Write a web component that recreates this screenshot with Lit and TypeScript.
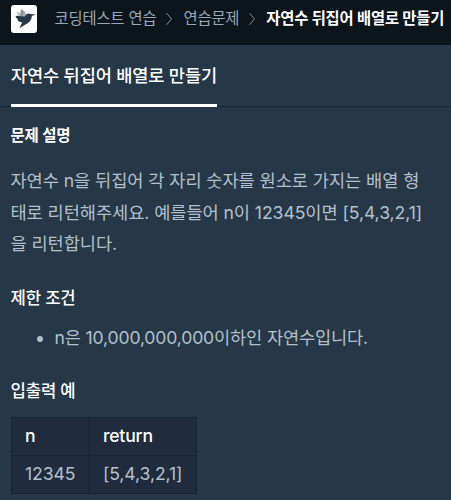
import { LitElement, html, css, svg } from "lit";
import { customElement } from "lit/decorators.js";

const chevron = html`<svg class="chevron" viewBox="0 0 8 14" aria-hidden="true">
  ${svg`<path d="M1.5 1.2 6.5 7 1.5 12.8" fill="none" stroke="currentColor" stroke-width="1" />`}
</svg>`;

@customElement("app-root")
export class AppRoot extends LitElement {
  static styles = css`
    :host {
      display: block;
      height: 500px;
      overflow: hidden;
      background: #263747;
      color: #b2c0cc;
      font-family: Inter, "Noto Sans CJK KR", sans-serif;
      font-size: 17.6px;
      line-height: 1.8;
      letter-spacing: -0.009em;
    }
    * { box-sizing: border-box; }
    .header {
      display: flex;
      align-items: center;
      height: 45px;
      padding: 0 0 8px 11px;
      background: #0c151c;
      color: #98a8b9;
      font-size: 15.35px;
      line-height: 24px;
      white-space: nowrap;
    }
    .logo { width: 26px; height: 28px; margin-right: 17.6px; flex: none; }
    .chevron { width: 8px; height: 14px; margin: 1px 10px 0 9px; flex: none; color: #78909c; }
    .current { color: #fff; font-weight: 700; }
    .tabs { display: flex; height: 62px; padding-left: 11px; border-bottom: 1px solid #172334; }
    .tab {
      height: 62px;
      padding-top: 15px;
      border-bottom: 3px solid #fff;
      color: #fff;
      font-weight: 500;
      white-space: nowrap;
    }
    .content { padding: 0 11px 0 10.5px; }
    h1, h2, p, ul { margin: 0; }
    h1, h2 { color: #fff; height: 24px; line-height: 24px; }
    h1 { margin-top: 17px; font-size: 15.5px; font-weight: 700; }
    h2 { font-size: 16.7px; font-weight: 500; }
    .description { margin-top: 17px; letter-spacing: -0.004em; white-space: nowrap; }
    .limits { margin-top: 26px; }
    ul { margin-top: 12px; padding-left: 44px; }
    .examples { margin-top: 25px; }
    table { margin: 14px 0 0 0.5px; border-collapse: collapse; background: #202b3d; }
    th, td {
      height: 38px;
      padding: 0 13.5px 0 13px;
      border: 1px solid #172334;
      line-height: 36px;
      text-align: left;
    }
    td { letter-spacing: -0.005em; }
    th { color: #fff; font-weight: 500; }
  `;

  render() {
    return html`
      <header class="header">
        <svg class="logo" viewBox="0 0 26 28" aria-label="Programmers">
          <rect width="26" height="28" rx="3" fill="#fff" />
          <path d="M5.5 6.5 10.5 8.5 10.5 11.5 6.5 10.5Z" fill="#c5c9ce" />
          <path d="M10 4 14.2 7 13 12 9 11Z" fill="#8d949e" />
          <path d="M13 6.2 15.7 9.5 14 12.5 11.5 11Z" fill="#adb2ba" />
          <path d="M4.5 10.8 13.8 11.5C14.8 9.3 17 8 19.2 8.9L24.8 9.5 20.8 11C20.7 15.5 17.5 18 15 19.2L8.2 23.2 11.2 17.4C8.2 17 6.2 15.5 6.8 14.2 5.5 13.5 4.8 12 4.5 10.8Z" fill="#263747" />
        </svg>
        <span>코딩테스트 연습</span>${chevron}<span>연습문제</span>${chevron}<span class="current">자연수 뒤집어 배열로 만들기</span>
      </header>
      <nav class="tabs"><span class="tab">자연수 뒤집어 배열로 만들기</span></nav>
      <main class="content">
        <h1>문제 설명</h1>
        <p class="description">
          자연수 n을 뒤집어 각 자리 숫자를 원소로 가지는 배열 형<br />태로 리턴해주세요. 예를들어 n이 12345이면 [5,4,3,2,1]<br />을 리턴합니다.
        </p>
        <h2 class="limits">제한 조건</h2>
        <ul><li>n은 10,000,000,000이하인 자연수입니다.</li></ul>
        <h2 class="examples">입출력 예</h2>
        <table>
          <thead><tr><th>n</th><th>return</th></tr></thead>
          <tbody><tr><td>12345</td><td>[5,4,3,2,1]</td></tr></tbody>
        </table>
      </main>
    `;
  }
}
